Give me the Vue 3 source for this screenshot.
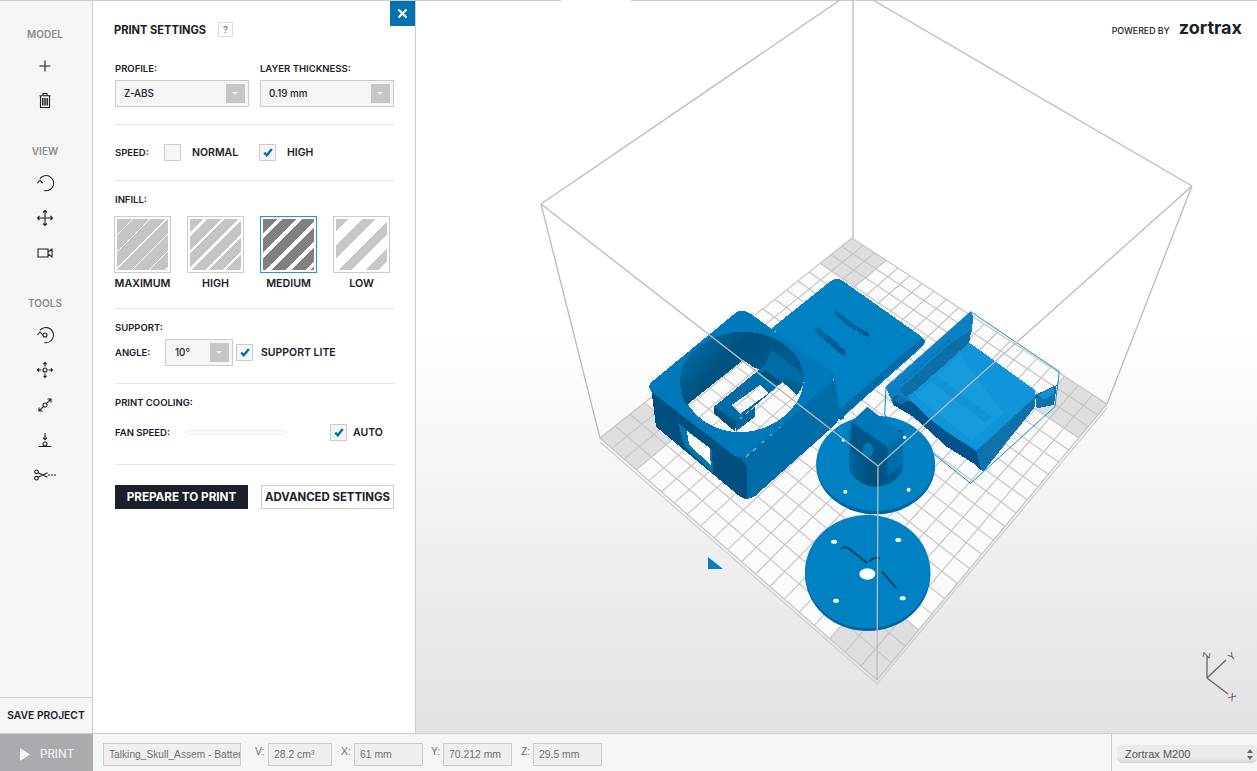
<script setup>
const tiles = [
  { name: 'MAXIMUM', cls: 'max' },
  { name: 'HIGH', cls: 'high' },
  { name: 'MEDIUM', cls: 'med', active: true },
  { name: 'LOW', cls: 'low' }
]

// Build plate corners in page coordinates: back, right, front, left
const B = [852, 238], R = [1107, 404], F = [877, 680], L = [600, 438]

function solve() {
  const [x0, y0] = B, [x1, y1] = R, [x2, y2] = F, [x3, y3] = L
  const dx1 = x1 - x2, dx2 = x3 - x2, dx3 = x0 - x1 + x2 - x3
  const dy1 = y1 - y2, dy2 = y3 - y2, dy3 = y0 - y1 + y2 - y3
  const det = dx1 * dy2 - dx2 * dy1
  const g = (dx3 * dy2 - dx2 * dy3) / det
  const h = (dx1 * dy3 - dx3 * dy1) / det
  return { a: x1 - x0 + g * x1, b: x3 - x0 + h * x3, c: x0, d: y1 - y0 + g * y1, e: y3 - y0 + h * y3, f: y0, g, h }
}
const H = solve()
function pt(u, v) {
  const w = H.g * u + H.h * v + 1
  return [(H.a * u + H.b * v + H.c) / w, (H.d * u + H.e * v + H.f) / w]
}
const n = 20
let d = ''
for (let i = 0; i <= n; i++) {
  const a = pt(i / n, 0), b = pt(i / n, 1), c = pt(0, i / n), e = pt(1, i / n)
  d += `M${a[0].toFixed(1)} ${a[1].toFixed(1)}L${b[0].toFixed(1)} ${b[1].toFixed(1)}`
  d += `M${c[0].toFixed(1)} ${c[1].toFixed(1)}L${e[0].toFixed(1)} ${e[1].toFixed(1)}`
}
const gridPath = d
const quad = (u0, v0, u1, v1) =>
  [pt(u0, v0), pt(u1, v0), pt(u1, v1), pt(u0, v1)].map(p => p.map(x => x.toFixed(1)).join(',')).join(' ')
const s = 3 / n
const cornerTiles = [quad(0, 0, s, s), quad(1 - s, 0, 1, s), quad(1 - s, 1 - s, 1, 1), quad(0, 1 - s, s, 1)]
const plate = [B, R, F, L].map(p => p.join(',')).join(' ')
</script>

<template>
  <div class="app">
    <div class="main">
      <aside class="rail">
        <div class="rail-tools">
          <div class="rail-label">MODEL</div>
          <div class="rail-icon">
            <svg width="24" height="24" viewBox="0 0 24 24"><path d="M12 6.5v11M6.5 12h11" /></svg>
          </div>
          <div class="rail-icon">
            <svg width="24" height="24" viewBox="0 0 24 24"><path d="M6.5 6.7h11M10 6.7V4.5h4v2.2M7.5 6.7v11.8h9V6.7M9.6 9v7.5M11.2 9v7.5M12.8 9v7.5M14.4 9v7.5" /></svg>
          </div>

          <div class="rail-label second">VIEW</div>
          <div class="rail-icon">
            <svg width="24" height="24" viewBox="0 0 24 24"><path d="M7 7.6A7.6 7.6 0 1 1 11 19.5M4.2 12.2 7 9.2l2.6 3" /></svg>
          </div>
          <div class="rail-icon">
            <svg width="24" height="24" viewBox="0 0 24 24"><path d="M12 4.5v15M4.5 12h15M10 6.5l2-2 2 2M10 17.5l2 2 2-2M6.5 10l-2 2 2 2M17.5 10l2 2-2 2" /></svg>
          </div>
          <div class="rail-icon">
            <svg width="24" height="24" viewBox="0 0 24 24"><path d="M5 8h10v8H5zM15 11l4-3v8l-4-3" /></svg>
          </div>

          <div class="rail-label second">TOOLS</div>
          <div class="rail-icon">
            <svg width="24" height="24" viewBox="0 0 24 24"><path d="M7 7.2A7.6 7.6 0 1 1 11.5 19.6M4.4 12 7 9l2.6 3" /><circle cx="12" cy="12" r="2" /></svg>
          </div>
          <div class="rail-icon">
            <svg width="24" height="24" viewBox="0 0 24 24"><circle cx="12" cy="12" r="2" /><path d="M12 4.5v4M12 15.5v4M4.5 12h4M15.5 12h4M10.4 6.1 12 4.5l1.6 1.6M10.4 17.9 12 19.5l1.6-1.6M6.1 10.4 4.5 12l1.6 1.6M17.9 10.4l1.6 1.6-1.6 1.6" /></svg>
          </div>
          <div class="rail-icon">
            <svg width="24" height="24" viewBox="0 0 24 24"><circle cx="12" cy="12" r="2" /><path d="M13.6 10.4 18 6M14.5 6H18v3.5M10.4 13.6 6 18M6 14.5V18h3.5" /></svg>
          </div>
          <div class="rail-icon">
            <svg width="24" height="24" viewBox="0 0 24 24"><path d="M12 5v6.5M10 9.6l2 2 2-2M5.5 18.5h13" /><circle cx="12" cy="16" r="2" /></svg>
          </div>
          <div class="rail-icon">
            <svg width="24" height="24" viewBox="0 0 24 24"><circle cx="3.5" cy="8.8" r="1.8" /><circle cx="3.5" cy="15.2" r="1.8" /><path d="M5 9.7 14.5 14.3M5 14.3 14.5 9.7M15 12h2M18 12h2M21 12h2" /></svg>
          </div>
        </div>
        <button class="save">SAVE PROJECT</button>
      </aside>

      <section class="panel">
        <button class="close" aria-label="Close">
          <svg width="11" height="11" viewBox="0 0 11 11"><path d="M1.5 1.5l8 8M9.5 1.5l-8 8" /></svg>
        </button>

        <div class="title-row">
          <h2>PRINT SETTINGS</h2>
          <span class="help">?</span>
        </div>

        <div class="two">
          <div class="field">
            <label class="lbl">PROFILE:</label>
            <div class="select"><span>Z-ABS</span><i class="arrow"></i></div>
          </div>
          <div class="field">
            <label class="lbl">LAYER THICKNESS:</label>
            <div class="select"><span>0.19 mm</span><i class="arrow"></i></div>
          </div>
        </div>
        <hr class="hr-a" />

        <div class="speed">
          <span class="lbl l-speed">SPEED:</span>
          <span class="check"></span>
          <span class="opt o1">NORMAL</span>
          <span class="check on"><svg width="10" height="9" viewBox="0 0 10 9"><path d="M1.2 4.6 3.8 7.3 8.8 1" /></svg></span>
          <span class="opt o2">HIGH</span>
        </div>
        <hr class="hr-b" />

        <div class="lbl sec">INFILL:</div>
        <div class="tiles">
          <div v-for="t in tiles" :key="t.name" class="tile-wrap">
            <div class="tile" :class="{ active: t.active }"><div class="fill" :class="t.cls"></div></div>
            <div class="tile-name">{{ t.name }}</div>
          </div>
        </div>
        <hr class="hr-c" />

        <div class="lbl sec">SUPPORT:</div>
        <div class="angle">
          <span class="lbl l-angle">ANGLE:</span>
          <div class="select small"><span>10°</span><i class="arrow"></i></div>
          <span class="check on c3"><svg width="10" height="9" viewBox="0 0 10 9"><path d="M1.2 4.6 3.8 7.3 8.8 1" /></svg></span>
          <span class="opt o3">SUPPORT LITE</span>
        </div>
        <hr class="hr-a" />

        <div class="lbl sec">PRINT COOLING:</div>
        <div class="fan">
          <span class="lbl l-fan">FAN SPEED:</span>
          <span class="track"></span>
          <span class="check on c4"><svg width="10" height="9" viewBox="0 0 10 9"><path d="M1.2 4.6 3.8 7.3 8.8 1" /></svg></span>
          <span class="opt o4">AUTO</span>
        </div>
        <hr class="hr-d" />

        <div class="actions">
          <button class="primary">PREPARE TO PRINT</button>
          <button class="secondary">ADVANCED SETTINGS</button>
        </div>
      </section>

      <div class="stage">
        <svg class="scene" width="841" height="733" viewBox="416 0 841 733">
          <defs>
            <linearGradient id="wall" x1="0" y1="0" x2="1" y2="0.5">
              <stop offset="0" stop-color="#0076b4" />
              <stop offset="0.45" stop-color="#00527f" />
              <stop offset="1" stop-color="#005e93" />
            </linearGradient>
            <linearGradient id="cyl" x1="0" y1="0" x2="1" y2="0">
              <stop offset="0" stop-color="#00669f" />
              <stop offset="0.4" stop-color="#004f7d" />
              <stop offset="1" stop-color="#005f95" />
            </linearGradient>
          </defs>

          <path d="M416 0.5H561M631 0.5H1257" class="topline" />

          <!-- build plate -->
          <polygon :points="plate" fill="#fbfbfb" />
          <polygon v-for="(q, i) in cornerTiles" :key="i" :points="q" fill="#dedede" />
          <path :d="gridPath" class="grid" />
          <path d="M600 442 877 684 1107 408" class="plate-edge" />

          <!-- back of the bounding cube -->
          <path d="M541 204 840 0M1192 186 873 0M853 0V238M541 204 600 438M1192 186 1107 404" class="cube" />

          <!-- model: box and plate, coordinates from a 3x crop at 640,270 -->
          <g transform="translate(640 270) scale(.33333)" shape-rendering="crispEdges">
            <path d="M395 175 570 35Q590 18 612 35L845 200Q865 215 845 232L610 440 590 430 580 320Z" fill="#0081c2" />
            <path d="M855 218 612 436 612 446 600 452 590 425 845 205Z" fill="#006ba6" />
            <path d="M580 130 590 124 652 170 645 184Z" fill="#00659f" />
            <path d="M650 170 688 190 684 203 650 182Z" fill="#00588c" />
            <path d="M522 182 532 172 597 220 596 228Z" fill="#00659f" />
            <path d="M530 190 596 226 620 245 612 260Z" fill="#005d94" />

            <path d="M32 345 48 470 300 680Q320 695 345 678L590 460 600 435 585 325 320 560Z" fill="#006ca8" />
            <path d="M32 345 48 470 300 680 322 688 320 590 300 560Z" fill="#00507f" />

            <path fill-rule="evenodd" fill="#0079bb"
              d="M30 340 285 130Q305 115 330 130L575 305Q590 320 575 335L330 550Q305 570 280 555L40 370Q22 355 30 340Z
                 M120 325C120 260 205 185 305 185 410 185 492 250 492 325 492 410 400 487 300 487 200 487 120 410 120 325Z" />

            <path fill="url(#wall)" d="M140 405C125 385 120 355 120 325 120 260 205 185 305 185 410 185 492 250 492 325 492 345 483 360 470 375L390 300 345 295 310 270Z" />

            <path fill="#00669f" d="M290 455 345 410 345 440 287 485Z" />
            <path fill="#00527f" d="M222 410 290 455 285 485 222 430Z" />
            <path fill-rule="evenodd" fill="#006ca7" d="M222 410 375 285 395 240 490 310 488 345 440 325 290 455Z M275 405 300 432 385 370 360 345Z" />
            <path fill="#00527f" d="M375 300 425 335 412 345 362 312Z" />

            <!-- window in the box wall -->
            <path fill="#0077b5" d="M114 459 216 540 219 609 135 531Z" />
            <path fill="#fff" d="M140 482 210 535 212 585 148 525Z" />
          </g>

          <!-- tray, disc and disc, coordinates from a 3x crop at 780,300 -->
          <g transform="translate(780 300) scale(.33333)">
            <path d="M572 35 838 215 825 320 572 550 314 345 318 260Z" fill="none" stroke="#0d8ccb" stroke-width="3" />
            <g shape-rendering="crispEdges">
              <path d="M318 262 572 35 580 50 568 128 765 270 765 320 610 515 580 490 500 440 400 350 340 315Z" fill="#0d7fc0" />
              <path d="M338 295 350 285 400 310 470 370 500 395 590 455 605 515 580 490 500 440 450 395 400 350 340 315Z" fill="#00538a" />
              <path d="M590 455 765 295 765 320 610 515Z" fill="#0e71aa" />
              <path d="M765 285 830 255 822 315 770 325Z" fill="#0e71aa" />
              <path d="M775 285 820 262 824 280 790 300Z" fill="#1290d0" />
              <path d="M380 285 568 128 765 270 765 290 590 450 500 395 440 350 400 310Z" fill="#1096d8" />
              <path d="M405 285 540 165 670 340 575 420Z" fill="#169cdd" />
              <path d="M470 225 635 350 615 368 450 243Z" fill="#1193d5" />
              <path d="M318 262 572 35 580 50 575 95 515 128 360 268 345 290Z" fill="#0c80c2" />
              <path d="M360 268 515 128 572 92 568 128 395 282 375 290Z" fill="#0e6ea6" />
              <path d="M355 285 385 300 365 315 340 300Z" fill="#0d72ac" />
            </g>
            <path d="M370 245 510 120" fill="none" stroke="#005e93" stroke-width="2" stroke-dasharray="14 8" />

            <ellipse cx="287" cy="497" rx="178" ry="146" fill="#00669f" />
            <ellipse cx="287" cy="490" rx="178" ry="143" fill="#0081c2" />
            <path d="M208 390V505C215 540 260 562 290 560 330 558 360 535 368 505V390Z" fill="url(#cyl)" />
            <path d="M262 320 370 405 322 442 214 365Z" fill="#0078b8" />
            <path d="M214 365 322 442 322 528 215 450Z" fill="#00558a" />
            <path d="M322 442 370 405 368 495 322 528Z" fill="#006ca8" />
            <ellipse cx="264" cy="450" rx="16" ry="22" fill="#0078b8" />
            <circle cx="190" cy="420" r="5" fill="#fff" />
            <circle cx="374" cy="412" r="5" fill="#fff" />
            <circle cx="196" cy="575" r="6" fill="#fff" />
            <circle cx="386" cy="569" r="6" fill="#fff" />

            <ellipse cx="263" cy="823" rx="188" ry="170" fill="#00659f" />
            <ellipse cx="263" cy="815" rx="188" ry="170" fill="#0081c2" />
            <path d="M183 747Q195 735 215 752L262 790M268 785Q282 768 300 775M306 815 350 865" fill="none" stroke="#00436c" stroke-width="6" />
            <ellipse cx="262" cy="822" rx="24" ry="17" fill="#fff" />
            <ellipse cx="162" cy="725" rx="9" ry="6" fill="#fff" />
            <ellipse cx="355" cy="720" rx="9" ry="6" fill="#fff" />
            <ellipse cx="168" cy="902" rx="9" ry="6" fill="#fff" />
            <ellipse cx="368" cy="895" rx="9" ry="6" fill="#fff" />
          </g>

          <!-- front of the bounding cube -->
          <path d="M541 204 878 466 1192 186M878 466 877 680" class="cube" />

          <polygon points="708,557 723,569 708,569" fill="#0a7bbb" />

          <!-- axes -->
          <g class="axes">
            <path d="M1207 678V656M1207 678 1226 660M1207 678 1228 694" />
            <text x="1202" y="658" transform="rotate(-80 1206 654)">Z</text>
            <text x="1228" y="660" transform="rotate(-40 1231 656)">Y</text>
            <text x="1229" y="701" transform="rotate(40 1233 697)">X</text>
          </g>
        </svg>

        <div class="brand">
          <span class="powered">POWERED BY</span>
          <span class="logo">zortrax</span>
        </div>
      </div>
    </div>

    <footer class="bar">
      <button class="print">
        <svg width="10" height="13" viewBox="0 0 10 13"><path d="M0 0 10 6.5 0 13Z" /></svg>
        <span>PRINT</span>
      </button>
      <div class="readouts">
        <div class="ro file">Talking_Skull_Assem - Battery</div>
        <span class="ro-l v">V:</span>
        <div class="ro w64">28.2 cm³</div>
        <span class="ro-l x">X:</span>
        <div class="ro w69">61 mm</div>
        <span class="ro-l y">Y:</span>
        <div class="ro w69">70.212 mm</div>
        <span class="ro-l z">Z:</span>
        <div class="ro w69">29.5 mm</div>
      </div>
      <div class="printer">
        <div class="native">
          <span>Zortrax M200</span>
          <svg width="8" height="13" viewBox="0 0 8 13"><path d="M4 1 7 5H1ZM4 12 1 8H7Z" /></svg>
        </div>
      </div>
    </footer>
  </div>
</template>

<style>
html, body { margin: 0; padding: 0; overflow: hidden; background: #fff; }
</style>

<style scoped>
.app {
  width: 1257px;
  height: 771px;
  display: flex;
  flex-direction: column;
  font-family: Inter, "Liberation Sans", sans-serif;
  color: #1a2029;
  overflow: hidden;
}
.main { flex: 0 0 733px; display: flex; }

/* left rail */
.rail {
  width: 93px;
  box-sizing: border-box;
  background: #f5f5f5;
  border-top: 1px solid #ccc;
  border-right: 1px solid #ccc;
  display: flex;
  flex-direction: column;
  justify-content: space-between;
}
.rail-tools { padding: 26px 2px 0 0; }
.rail-label {
  height: 14px;
  line-height: 14px;
  margin-bottom: 7px;
  text-align: center;
  font-size: 10px;
  font-weight: 600;
  color: #898c90;
}
.rail-label.second { margin-top: 26px; }
.rail-icon { height: 35px; display: flex; align-items: center; justify-content: center; }
.rail-icon svg { fill: none; stroke: #1d2127; stroke-width: 1.1; overflow: visible; }
.save {
  height: 36px;
  border: 0;
  border-top: 1px solid #ccc;
  background: #f5f5f5;
  padding: 0 0 2px 0;
  font: 600 10.3px Inter, "Liberation Sans", sans-serif;
  color: #1a2029;
  white-space: nowrap;
}

/* settings panel */
.panel {
  position: relative;
  width: 323px;
  box-sizing: border-box;
  padding: 21px 20px 0 22px;
  background: #fff;
  border-top: 1px solid #ccc;
  border-right: 1px solid #ccc;
}
.close {
  position: absolute;
  top: 0;
  right: 0;
  width: 25px;
  height: 25px;
  border: 0;
  padding: 0;
  background: #0072ad;
  display: flex;
  align-items: center;
  justify-content: center;
}
.close svg { fill: none; stroke: #fff; stroke-width: 2; }
.title-row { display: flex; align-items: center; height: 15px; margin-left: -1px; }
.title-row h2 { margin: 0; width: 104px; font-size: 11.1px; font-weight: 700; white-space: nowrap; }
.help {
  width: 15px;
  height: 15px;
  box-sizing: border-box;
  border: 1px solid #ddd;
  font-size: 9px;
  font-weight: 600;
  line-height: 13px;
  text-align: center;
  color: #777;
}
.lbl { font-size: 9.5px; font-weight: 600; line-height: 12px; white-space: nowrap; }
.opt { font-size: 10.5px; font-weight: 600; line-height: 12px; white-space: nowrap; }

.two { display: flex; gap: 11px; margin-top: 26px; }
.field { width: 134px; display: flex; flex-direction: column; gap: 5px; }
.select {
  height: 27px;
  box-sizing: border-box;
  border: 1px solid #ccc;
  background: #f5f5f5;
  display: flex;
  align-items: center;
  justify-content: space-between;
  padding: 0 3px 0 8px;
  font-size: 9.8px;
  font-weight: 500;
}
.select span { margin-top: -1px; }
.arrow {
  position: relative;
  width: 19px;
  height: 19px;
  background: #c6c6c6;
}
.arrow::after {
  content: "";
  position: absolute;
  left: 6px;
  top: 8px;
  border-left: 3px solid transparent;
  border-right: 3px solid transparent;
  border-top: 3px solid #f2f2f2;
}
hr { border: 0; height: 1px; background: #e6e6e6; margin: 0; width: 280px; }
.hr-a { margin-top: 17px; }
.hr-b { margin-top: 19px; }
.hr-c { margin-top: 18px; }
.hr-d { margin-top: 23px; }

.check {
  width: 17px;
  height: 17px;
  box-sizing: border-box;
  border: 1px solid #ccc;
  background: #f5f5f5;
  display: flex;
  align-items: center;
  justify-content: center;
  flex: none;
}
.check svg { fill: none; stroke: #0072ad; stroke-width: 2.4; }
.speed { display: flex; align-items: center; height: 17px; margin-top: 19px; }
.l-speed { width: 49px; }
.o1 { width: 49px; margin: 0 18px 0 11px; }
.o2 { margin-left: 11px; }

.sec { margin-top: 13px; }
.tiles { display: flex; gap: 16px; margin: 10px 0 0 -1px; }
.tile-wrap { width: 57px; }
.tile {
  width: 57px;
  height: 57px;
  box-sizing: border-box;
  border: 1px solid #ccc;
  padding: 2px;
}
.tile.active { border-color: #1b9ad0; }
.fill { width: 51px; height: 51px; }
.fill.max { background: repeating-linear-gradient(135deg, #c5c5c5 0 11px, #fff 11px 11.8px); }
.fill.high { background: repeating-linear-gradient(135deg, #c5c5c5 0 9.8px, #fff 9.8px 12.3px); }
.fill.med { background: repeating-linear-gradient(135deg, #808080 0 10px, #fff 10px 14px); }
.fill.low { background: repeating-linear-gradient(135deg, #c8c8c8 0 9px, #fff 9px 19px); }
.tile-name {
  margin: 5px -6px 0;
  height: 12px;
  text-align: center;
  font-size: 10.7px;
  font-weight: 600;
  line-height: 12px;
}

.angle { display: flex; align-items: center; margin-top: 5px; height: 27px; }
.l-angle { width: 40px; }
.select.small { width: 68px; margin-left: 10px; padding-left: 9px; }
.c3 { margin-left: 3px; }
.o3 { margin-left: 8px; }

.fan { display: flex; align-items: center; margin-top: 15px; height: 17px; }
.l-fan { width: 62px; }
.track {
  margin-left: 8px;
  width: 102px;
  height: 5px;
  box-sizing: border-box;
  border: 1px solid #eee;
  border-radius: 3px;
  background: #fafafa;
}
.c4 { margin-left: 43px; }
.o4 { margin-left: 6px; }

.actions { display: flex; gap: 13px; margin-top: 20px; }
.actions button {
  height: 24px;
  width: 133px;
  padding: 0;
  font-family: Inter, "Liberation Sans", sans-serif;
  font-weight: 700;
  white-space: nowrap;
  box-sizing: border-box;
}
.primary { background: #1a2029; border: 0; color: #fff; font-size: 11.7px; }
.secondary { background: #fff; border: 1px solid #ccc; color: #1a2029; font-size: 11.4px; }

/* 3D stage */
.stage {
  position: relative;
  flex: 1;
  background: linear-gradient(#fff 0, #fff 45%, #e2e2e2 100%);
  overflow: hidden;
}
.scene { position: absolute; left: 0; top: 0; display: block; }
.topline { fill: none; stroke: #ccc; stroke-width: 1; }
.grid { fill: none; stroke: #c6c6c6; stroke-width: 1.2; }
.plate-edge { fill: none; stroke: #cfcfcf; stroke-width: 1.2; }
.cube { fill: none; stroke: #bababa; stroke-width: 1.3; }
.axes path { fill: none; stroke: #666; stroke-width: 1.3; }
.axes text { font: 10px "Liberation Sans", sans-serif; fill: #555; }
.brand {
  position: absolute;
  top: 18px;
  right: 15px;
  display: flex;
  align-items: baseline;
  gap: 9px;
}
.powered { font-size: 8.8px; font-weight: 500; color: #1a2029; white-space: nowrap; }
.logo {
  font-size: 18px;
  font-weight: 700;
  line-height: 20px;
  color: #1a2029;
}

/* bottom bar */
.bar {
  flex: 1;
  display: flex;
  box-sizing: border-box;
  border-top: 1px solid #ccc;
  background: #f5f5f5;
  font-family: "Liberation Sans", sans-serif;
}
.print {
  width: 93px;
  border: 0;
  padding: 3px 0 0 20px;
  background: #a9abae;
  display: flex;
  align-items: center;
  gap: 10px;
  color: #eee;
  font: 500 11.5px Inter, "Liberation Sans", sans-serif;
}
.print svg { fill: #f5f5f5; }
.readouts { flex: 1; display: flex; align-items: flex-start; padding-left: 10px; padding-top: 9px; }
.ro {
  height: 23px;
  box-sizing: border-box;
  border: 1px solid #ccc;
  background: #efefef;
  padding: 0 0 0 5px;
  font-size: 10.4px;
  line-height: 21px;
  color: #707070;
  white-space: nowrap;
  overflow: hidden;
}
.ro.file { width: 138px; font-size: 10.2px; }
.ro.w64 { width: 64px; }
.ro.w69 { width: 69px; }
.ro-l { font-size: 10.4px; line-height: 18px; color: #707070; width: 13px; }
.ro-l.v { margin-left: 14px; }
.ro-l.x { margin-left: 9px; }
.ro-l.y { margin-left: 8px; margin-right: -1px; }
.ro-l.z { margin-left: 9px; margin-right: -1px; }
.printer {
  width: 146px;
  box-sizing: border-box;
  border-left: 1px solid #ccc;
  padding: 11px 0 0 5px;
}
.native {
  height: 18px;
  box-sizing: border-box;
  padding: 0 3px 0 8px;
  border-radius: 5px;
  background: linear-gradient(#e9e9e9, #ececec 70%, #d4d4d4);
  display: flex;
  align-items: center;
  justify-content: space-between;
  font-size: 11px;
  color: #555;
}
.native svg { fill: #666; }
</style>
